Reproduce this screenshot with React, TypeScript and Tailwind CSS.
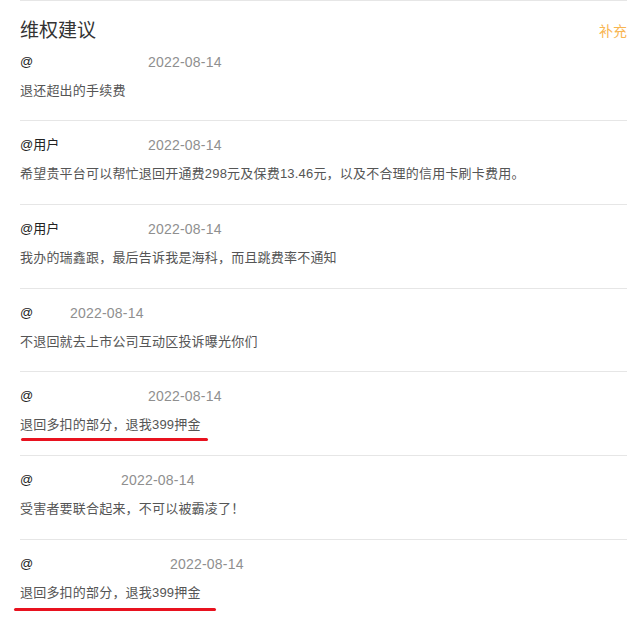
import React from "react";

type Entry = {
  name: string;
  nameW: string;
  text: string;
  underline?: "a" | "b";
};

const entries: Entry[] = [
  { name: "@", nameW: "w-[128px]", text: "退还超出的手续费" },
  { name: "@用户", nameW: "w-[128px]", text: "希望贵平台可以帮忙退回开通费298元及保费13.46元，以及不合理的信用卡刷卡费用。" },
  { name: "@用户", nameW: "w-[128px]", text: "我办的瑞鑫跟，最后告诉我是海科，而且跳费率不通知" },
  { name: "@", nameW: "w-[50px]", text: "不退回就去上市公司互动区投诉曝光你们" },
  { name: "@", nameW: "w-[128px]", text: "退回多扣的部分，退我399押金", underline: "a" },
  { name: "@", nameW: "w-[101px]", text: "受害者要联合起来，不可以被霸凌了！" },
  { name: "@", nameW: "w-[150px]", text: "退回多扣的部分，退我399押金", underline: "b" },
];

export default function App() {
  return (
    <div
      className="w-[641px] h-[623px] bg-white overflow-hidden"
      style={{ fontFamily: '"Liberation Sans", "Noto Sans CJK SC", sans-serif' }}
    >
      <div className="ml-[20px] w-[607px] border-t border-[#e6e6e6]">
        <div className="flex items-center justify-between pt-[15px] h-[44px]">
          <div className="text-[19px] leading-[28px] text-[#333333]">维权建议</div>
          <div className="text-[14px] leading-[28px] text-[#f8b551]">补充</div>
        </div>
        {entries.map((e, i) => (
          <div
            key={i}
            className={
              i === 0
                ? "pt-[7px] pb-[19px]"
                : i === 3
                ? "border-t border-[#e6e6e6] pt-[14px] pb-[19px]"
                : "border-t border-[#e6e6e6] pt-[14px] pb-[20px]"
            }
          >
            <div className="flex items-center h-[20px]">
              <span className={`${e.nameW} text-[13px] text-[#222222]`}>{e.name}</span>
              <span className="text-[14px] text-[#8f8f8f] tracking-[0.2px]">2022-08-14</span>
            </div>
            <div className="mt-[9px] h-[20px] flex items-center">
              <span className="relative text-[13px] text-[#555555] leading-[20px] tracking-[0.2px]">
                {e.text}
                {e.underline === "a" && (
                  <span className="absolute left-[1px] top-[23px] w-[187px] h-[3px] rounded-full bg-[#e8121f]" />
                )}
                {e.underline === "b" && (
                  <span className="absolute left-[-6px] top-[25px] w-[202px] h-[3px] rounded-full bg-[#e8121f]" />
                )}
              </span>
            </div>
          </div>
        ))}
      </div>
    </div>
  );
}
